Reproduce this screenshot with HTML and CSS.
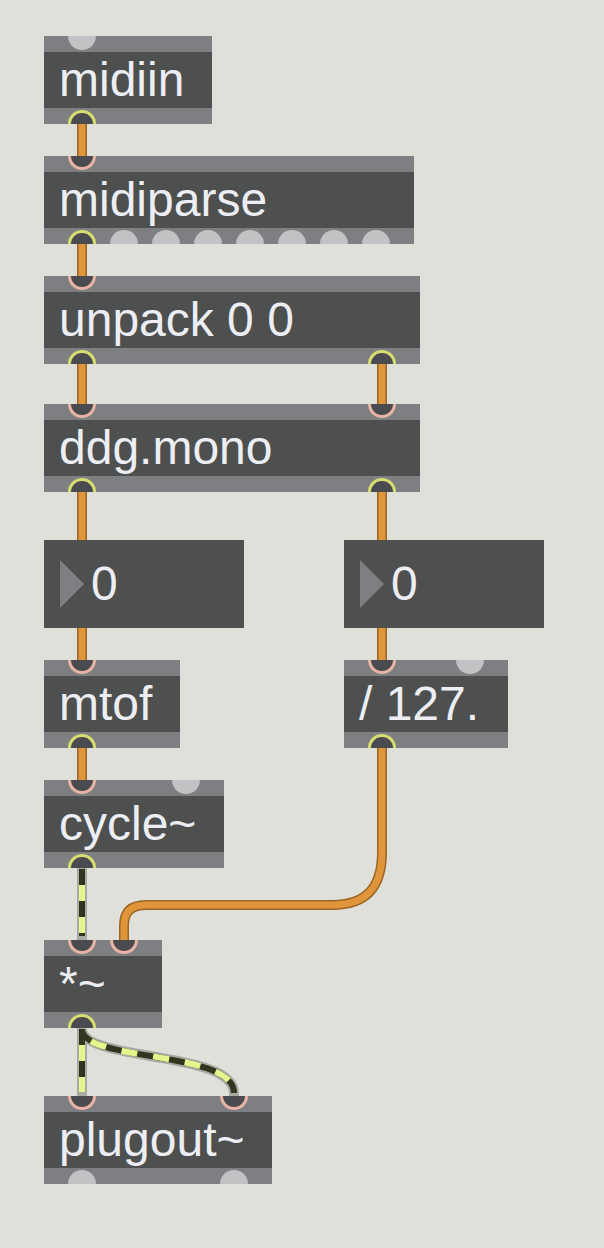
FILE: index.html
```html
<!DOCTYPE html>
<html>
<head>
<meta charset="utf-8">
<link rel="stylesheet" href="styles.css">
</head>
<body>
<div class="patch">
  <svg class="cords" width="604" height="1248" viewBox="0 0 604 1248">
    <defs>
      <path id="c1" d="M82 122 V158"/>
      <path id="c2" d="M82 242 V278"/>
      <path id="c3" d="M82 362 V406"/>
      <path id="c4" d="M382 362 V406"/>
      <path id="c5" d="M82 490 V542"/>
      <path id="c6" d="M382 490 V542"/>
      <path id="c7" d="M82 626 V662"/>
      <path id="c8" d="M382 626 V662"/>
      <path id="c9" d="M82 746 V782"/>
      <path id="c10" d="M382 746 V852 C382 888 366 905 332 905 H146 C131 905 124 912 124 926 V942"/>
      <path id="s1" d="M82 869 V936"/>
      <path id="s2" d="M82 1029 V1092"/>
      <path id="s3" d="M82 1029 C82 1062 234 1050 234 1093"/>
    </defs>
    <g class="ctl-edge">
      <use href="#c1"/><use href="#c2"/><use href="#c3"/><use href="#c4"/><use href="#c5"/>
      <use href="#c6"/><use href="#c7"/><use href="#c8"/><use href="#c9"/><use href="#c10"/>
    </g>
    <g class="ctl-core">
      <use href="#c1"/><use href="#c2"/><use href="#c3"/><use href="#c4"/><use href="#c5"/>
      <use href="#c6"/><use href="#c7"/><use href="#c8"/><use href="#c9"/><use href="#c10"/>
    </g>
    <g class="sig-edge"><use href="#s1"/><use href="#s2"/><use href="#s3"/></g>
    <g class="sig-dark"><use href="#s1"/><use href="#s2"/><use href="#s3"/></g>
    <g class="sig-lite"><use href="#s1"/><use href="#s2"/><use href="#s3"/></g>
  </svg>

  <div class="obj" style="left:44px;top:36px;width:168px">
    <div class="strip"></div><div class="label">midiin</div><div class="strip"></div>
    <span class="port in free" style="left:24px"></span>
    <span class="port out" style="left:24px"></span>
  </div>

  <div class="obj" style="left:44px;top:156px;width:370px">
    <div class="strip"></div><div class="label">midiparse</div><div class="strip"></div>
    <span class="port in" style="left:24px"></span>
    <span class="port out" style="left:24px"></span>
    <span class="port out free" style="left:66px"></span>
    <span class="port out free" style="left:108px"></span>
    <span class="port out free" style="left:150px"></span>
    <span class="port out free" style="left:192px"></span>
    <span class="port out free" style="left:234px"></span>
    <span class="port out free" style="left:276px"></span>
    <span class="port out free" style="left:318px"></span>
  </div>

  <div class="obj" style="left:44px;top:276px;width:376px">
    <div class="strip"></div><div class="label">unpack 0 0</div><div class="strip"></div>
    <span class="port in" style="left:24px"></span>
    <span class="port out" style="left:24px"></span>
    <span class="port out" style="left:324px"></span>
  </div>

  <div class="obj" style="left:44px;top:404px;width:376px">
    <div class="strip"></div><div class="label">ddg.mono</div><div class="strip"></div>
    <span class="port in" style="left:24px"></span>
    <span class="port in" style="left:324px"></span>
    <span class="port out" style="left:24px"></span>
    <span class="port out" style="left:324px"></span>
  </div>

  <div class="num" style="left:44px;top:540px">
    <span class="tri"></span><span class="val">0</span>
  </div>
  <div class="num" style="left:344px;top:540px">
    <span class="tri"></span><span class="val">0</span>
  </div>

  <div class="obj" style="left:44px;top:660px;width:136px">
    <div class="strip"></div><div class="label">mtof</div><div class="strip"></div>
    <span class="port in" style="left:24px"></span>
    <span class="port out" style="left:24px"></span>
  </div>

  <div class="obj" style="left:344px;top:660px;width:164px">
    <div class="strip"></div><div class="label">/ 127.</div><div class="strip"></div>
    <span class="port in" style="left:24px"></span>
    <span class="port in free" style="left:112px"></span>
    <span class="port out" style="left:24px"></span>
  </div>

  <div class="obj" style="left:44px;top:780px;width:180px">
    <div class="strip"></div><div class="label">cycle~</div><div class="strip"></div>
    <span class="port in" style="left:24px"></span>
    <span class="port in free" style="left:128px"></span>
    <span class="port out" style="left:24px"></span>
  </div>

  <div class="obj" style="left:44px;top:940px;width:118px">
    <div class="strip"></div><div class="label">*~</div><div class="strip"></div>
    <span class="port in" style="left:24px"></span>
    <span class="port in" style="left:66px"></span>
    <span class="port out" style="left:24px"></span>
  </div>

  <div class="obj" style="left:44px;top:1096px;width:228px">
    <div class="strip"></div><div class="label">plugout~</div><div class="strip"></div>
    <span class="port in" style="left:24px"></span>
    <span class="port in" style="left:176px"></span>
    <span class="port out free" style="left:24px"></span>
    <span class="port out free" style="left:176px"></span>
  </div>
</div>
</body>
</html>
```

FILE: styles.css
```css
html, body {
  margin: 0;
  padding: 0;
  background: #dfe0da;
}

.patch {
  position: relative;
  width: 604px;
  height: 1248px;
  overflow: hidden;
  font-family: "Liberation Sans", Arial, sans-serif;
}

.cords {
  position: absolute;
  left: 0;
  top: 0;
  z-index: 0;
}

.cords g {
  fill: none;
  stroke-linejoin: round;
}

.ctl-edge {
  stroke: #9a6526;
  stroke-width: 10;
  stroke-linecap: round;
}

.ctl-core {
  stroke: #e0953b;
  stroke-width: 7;
  stroke-linecap: round;
}

.sig-edge {
  stroke: #a9aaa4;
  stroke-width: 10;
  stroke-linecap: square;
}

.sig-dark {
  stroke: #30361f;
  stroke-width: 6;
  stroke-linecap: butt;
}

.sig-lite {
  stroke: #e4f68c;
  stroke-width: 6;
  stroke-linecap: butt;
  stroke-dasharray: 16 16;
  stroke-dashoffset: 16;
}

.obj {
  position: absolute;
  z-index: 1;
  height: 88px;
  overflow: hidden;
  display: flex;
  flex-direction: column;
  background: #4e504f;
}

.strip {
  height: 16px;
  background: #7e7f83;
  flex: none;
}

.label {
  height: 56px;
  line-height: 56px;
  padding-left: 15px;
  font-size: 48px;
  color: #eceef4;
  white-space: nowrap;
  flex: none;
}

.port {
  position: absolute;
  width: 28px;
  height: 28px;
  border-radius: 50%;
  box-sizing: border-box;
  background: #4a4b50;
}

.port.in {
  top: -14px;
  border: 3px solid #e9b4a4;
}

.port.out {
  bottom: -14px;
  border: 3px solid #d7dd72;
}

.port.free {
  border: none;
  background: #c1c2c4;
}

.num {
  position: absolute;
  z-index: 1;
  width: 200px;
  height: 88px;
  background: #4e504f;
  display: flex;
  align-items: center;
  padding-left: 16px;
  box-sizing: border-box;
}

.tri {
  width: 0;
  height: 0;
  border-top: 24px solid transparent;
  border-bottom: 24px solid transparent;
  border-left: 24px solid #7e7f83;
  flex: none;
}

.val {
  margin-left: 7px;
  font-size: 48px;
  line-height: 88px;
  color: #eceef4;
}
```
